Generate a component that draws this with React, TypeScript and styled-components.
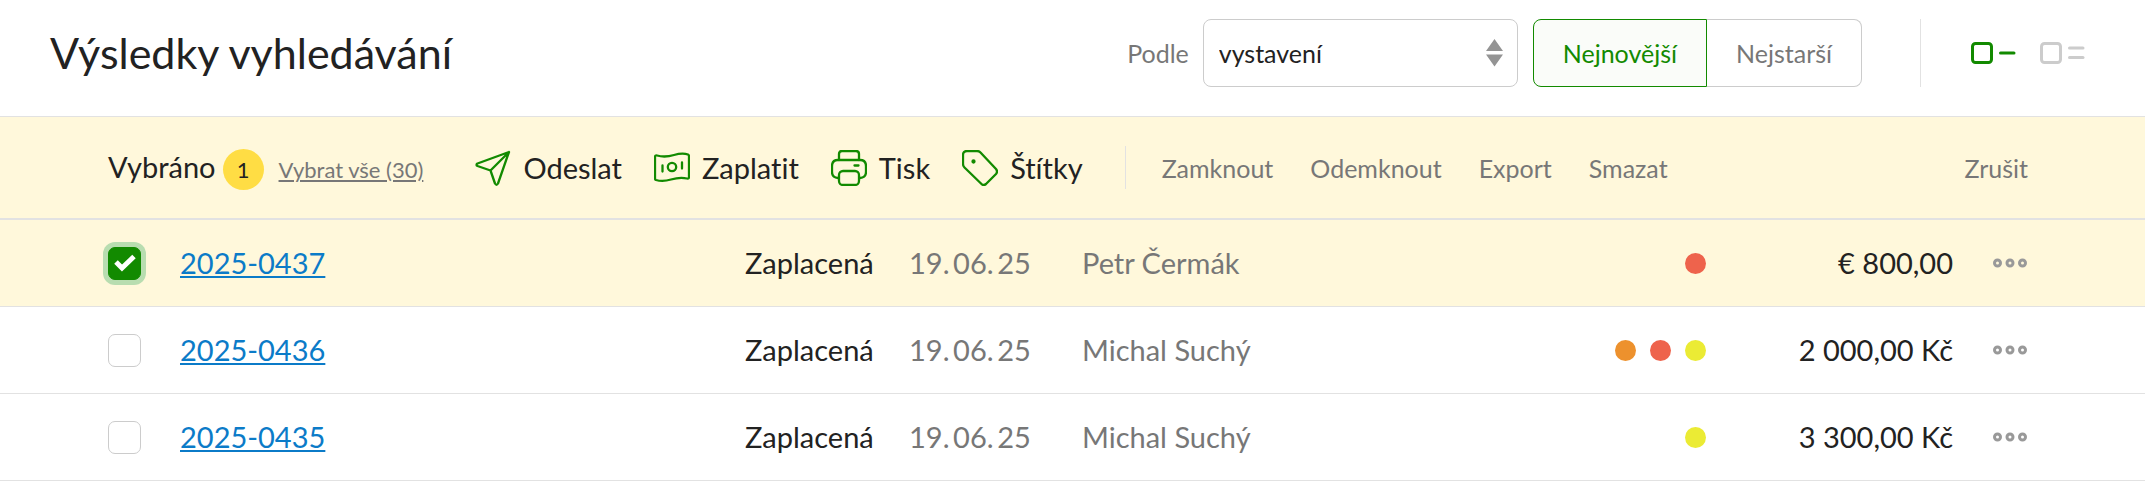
import React, { useState } from 'react';
import styled, { createGlobalStyle } from 'styled-components';

const green = '#128a00';
const ink = '#222222';
const gray = '#777777';
const line = '#e2e2e2';
const highlight = '#fff8db';

const GlobalStyle = createGlobalStyle`
  *, *::before, *::after { box-sizing: border-box; }
  body {
    margin: 0;
    background: #ffffff;
    color: ${ink};
    font-family: Lato, "Liberation Sans", sans-serif;
    font-size: 29px;
    line-height: 36px;
    font-variant-ligatures: none;
  }
  button, select, input { font: inherit; color: inherit; font-variant-ligatures: none; }
`;

const Header = styled.header`
  display: flex;
  align-items: center;
  padding: 19px 60px 29px 50px;
`;

const Title = styled.h1`
  margin: 0;
  margin-right: auto;
  font-size: 43px;
  font-weight: 400;
  line-height: 68px;
`;

const SortLabel = styled.label`
  margin-right: 14px;
  font-size: 25px;
  color: ${gray};
`;

const SelectWrap = styled.div`
  display: grid;
  align-items: center;
  width: 315px;
  margin-right: 15px;
`;

const Select = styled.select`
  grid-area: 1 / 1;
  width: 100%;
  height: 68px;
  padding: 0 48px 0 15px;
  font-size: 25px;
  appearance: none;
  background: #ffffff;
  border: 1px solid #cccccc;
  border-radius: 8px;
`;

const SelectArrows = styled.svg`
  grid-area: 1 / 1;
  justify-self: end;
  margin-right: 15px;
  pointer-events: none;
`;

const Segments = styled.div`
  display: flex;
`;

const Segment = styled.button<{ $active?: boolean }>`
  height: 68px;
  padding: 0 29px;
  font-size: 25px;
  color: ${p => (p.$active ? green : gray)};
  background: ${p => (p.$active ? '#fafcf9' : '#ffffff')};
  border: 1px solid ${p => (p.$active ? green : '#cccccc')};
  cursor: pointer;

  &:first-child { border-radius: 8px 0 0 8px; }
  &:last-child { border-radius: 0 8px 8px 0; border-left: 0; }
`;

const Views = styled.div`
  display: flex;
  align-items: center;
  gap: 24px;
  height: 68px;
  margin-left: 58px;
  padding-left: 50px;
  border-left: 1px solid ${line};
`;

const IconButton = styled.button`
  display: flex;
  padding: 0;
  color: ${p => p.color || 'inherit'};
  background: none;
  border: 0;
  cursor: pointer;
`;

const Toolbar = styled.div`
  display: flex;
  align-items: center;
  height: 104px;
  padding: 0 117px 0 108px;
  background: ${highlight};
  border-top: 1px solid ${line};
  border-bottom: 2px solid ${line};
`;

const Selection = styled.div`
  display: flex;
  align-items: baseline;
  padding-top: 4px;
`;

const Count = styled.span`
  margin: 0 15px 0 7px;
  width: 41px;
  height: 41px;
  font-size: 22px;
  line-height: 41px;
  text-align: center;
  background: #ffdd44;
  border-radius: 50%;
`;

const SelectAll = styled.a`
  font-size: 22px;
  color: ${gray};
`;

const Actions = styled.div`
  display: flex;
  gap: 32px;
  margin-left: 52px;
`;

const Action = styled.button`
  display: flex;
  align-items: center;
  gap: 12px;
  padding: 0;
  background: none;
  border: 0;
  cursor: pointer;

  svg { color: ${green}; }
`;

const MinorActions = styled.div`
  display: flex;
  align-items: center;
  gap: 37px;
  height: 43px;
  margin-left: 42px;
  padding-left: 36px;
  border-left: 1px solid ${line};
`;

const MinorAction = styled.button`
  padding: 0;
  font-size: 25px;
  color: ${gray};
  background: none;
  border: 0;
  cursor: pointer;
`;

const Cancel = styled(MinorAction)`
  margin-left: auto;
`;

const Table = styled.table`
  width: 100%;
  border-collapse: separate;
  border-spacing: 0;
  table-layout: fixed;
`;

const Row = styled.tr<{ $selected: boolean }>`
  background: ${p => (p.$selected ? highlight : '#ffffff')};
`;

const Cell = styled.td<{ $muted?: boolean; $right?: boolean }>`
  height: 87px;
  padding: 0;
  color: ${p => (p.$muted ? gray : ink)};
  text-align: ${p => (p.$right ? 'right' : 'left')};
  white-space: nowrap;
  border-bottom: 1px solid ${line};
`;

const CheckCell = styled(Cell)`
  padding-left: 108px;
`;

const MenuCell = styled(Cell)`
  padding-left: 40px;
`;

const DateText = styled.time`
  font-variant-numeric: tabular-nums;
`;

const CheckLabel = styled.label`
  display: grid;
  place-items: center;
  width: 33px;
  height: 33px;
`;

const Checkbox = styled.input`
  grid-area: 1 / 1;
  width: 33px;
  height: 33px;
  margin: 0;
  appearance: none;
  background: #ffffff;
  border: 1px solid #cccccc;
  border-radius: 7px;

  &:checked {
    background: ${green};
    border-color: ${green};
    box-shadow: 0 0 0 5px #b8ddb0;
  }
`;

const Tick = styled.svg`
  grid-area: 1 / 1;
  z-index: 1;
  pointer-events: none;
`;

const InvoiceLink = styled.a`
  color: #0b7bc8;
`;

const Tags = styled.div`
  display: flex;
  justify-content: flex-end;
  gap: 14px;
`;

const Tag = styled.span`
  width: 21px;
  height: 21px;
  background: ${p => p.color};
  border-radius: 50%;
`;

const stroke = {
  fill: 'none',
  stroke: 'currentColor',
  strokeWidth: 2.3,
  strokeLinecap: 'round' as const,
  strokeLinejoin: 'round' as const,
};

const SendIcon = () => (
  <svg width="36" height="36" viewBox="0 0 36 36" {...stroke}>
    <path d="M34 2 L2.500 13.500 Q0.500 15 2.500 16 L15.500 20.500 L20 33.500 Q21.500 36 23 33.500 Z M34 2 L15.500 20.500" />
  </svg>
);

const MoneyIcon = () => (
  <svg width="36" height="36" viewBox="0 0 36 36" {...stroke}>
    <path d="M1 7 Q1 5 3 5.500 C10 7.500 15 6.500 20 5 C25 3.500 30 3 34 4.500 Q35 5 35 6.500 V27 Q35 29 33 28.500 C27 27 22 28 17 29.500 C12 31 7 31.500 2 30 Q1 29.500 1 28.500 Z" />
    <circle cx="18" cy="17" r="4.200" />
    <path d="M8.500 15.500 V21.500 M28 12.500 V18.500" />
  </svg>
);

const PrinterIcon = () => (
  <svg width="36" height="36" viewBox="0 0 36 36" {...stroke}>
    <path d="M8 10 V4 Q8 1 11 1 H25 Q28 1 28 4 V10" />
    <path d="M7 28 Q1 27.500 1 22 V16 Q1 10 7 10 H29 Q35 10 35 16 V22 Q35 27.500 29 28" />
    <rect x="8" y="21" width="20" height="14" rx="4" />
    <path d="M23.500 15.500 H27.500" />
  </svg>
);

const TagIcon = () => (
  <svg width="36" height="36" viewBox="0 0 36 36" {...stroke}>
    <path d="M1 5 Q1 1 5 1 H15 Q17 1 18.500 2.500 L34 19 Q36 21.500 34 24 L24 34 Q21.500 36 19.500 34 L2.500 17.500 Q1 16 1 14 Z" />
    <circle cx="11.500" cy="11.500" r="1" fill="currentColor" />
  </svg>
);

const ViewIcon = ({ lines }: { lines: number[] }) => (
  <svg width="45" height="22" viewBox="0 0 45 22" {...stroke} strokeWidth={3}>
    <rect x="1.500" y="1.500" width="19" height="19" rx="3" />
    {lines.map(y => <path key={y} d={`M29.500 ${y} H43`} />)}
  </svg>
);

const MenuIcon = () => (
  <svg width="34" height="10" viewBox="0 0 34 10" fill="none" stroke="#999999" strokeWidth="3">
    <circle cx="4.500" cy="5" r="3" />
    <circle cx="17" cy="5" r="3" />
    <circle cx="29.500" cy="5" r="3" />
  </svg>
);

const red = '#ee634c';
const orange = '#ed912d';
const yellow = '#ebeb34';

const invoices = [
  { id: '2025-0437', client: 'Petr Čermák', tags: [red], amount: '€ 800,00' },
  { id: '2025-0436', client: 'Michal Suchý', tags: [orange, red, yellow], amount: '2 000,00 Kč' },
  { id: '2025-0435', client: 'Michal Suchý', tags: [yellow], amount: '3 300,00 Kč' },
];

const actions = [
  { label: 'Odeslat', Icon: SendIcon },
  { label: 'Zaplatit', Icon: MoneyIcon },
  { label: 'Tisk', Icon: PrinterIcon },
  { label: 'Štítky', Icon: TagIcon },
];

export default function App() {
  const [selected, setSelected] = useState<string[]>(['2025-0437']);
  const [newest, setNewest] = useState(true);
  const toggle = (id: string) =>
    setSelected(s => (s.includes(id) ? s.filter(x => x !== id) : [...s, id]));

  return (
    <>
      <GlobalStyle />
      <Header>
        <Title>Výsledky vyhledávání</Title>
        <SortLabel htmlFor="sort">Podle</SortLabel>
        <SelectWrap>
          <Select id="sort">
            <option>vystavení</option>
            <option>splatnosti</option>
          </Select>
          <SelectArrows width="17" height="28" viewBox="0 0 17 28" fill="#949494">
            <path d="M8.500 0 L17 12 H0 Z M0 15.500 H17 L8.500 27.500 Z" />
          </SelectArrows>
        </SelectWrap>
        <Segments>
          <Segment $active={newest} onClick={() => setNewest(true)}>Nejnovější</Segment>
          <Segment $active={!newest} onClick={() => setNewest(false)}>Nejstarší</Segment>
        </Segments>
        <Views>
          <IconButton color={green} aria-label="Kompaktní zobrazení"><ViewIcon lines={[11]} /></IconButton>
          <IconButton color="#cccccc" aria-label="Podrobné zobrazení"><ViewIcon lines={[6, 15.5]} /></IconButton>
        </Views>
      </Header>
      <Toolbar>
        <Selection>
          <span>Vybráno</span>
          <Count>{selected.length}</Count>
          <SelectAll href="#all">Vybrat vše (30)</SelectAll>
        </Selection>
        <Actions>
          {actions.map(({ label, Icon }) => (
            <Action key={label}><Icon />{label}</Action>
          ))}
        </Actions>
        <MinorActions>
          {['Zamknout', 'Odemknout', 'Export', 'Smazat'].map(label => (
            <MinorAction key={label}>{label}</MinorAction>
          ))}
        </MinorActions>
        <Cancel onClick={() => setSelected([])}>Zrušit</Cancel>
      </Toolbar>
      <Table>
        <colgroup>
          <col style={{ width: 180 }} />
          <col />
          <col style={{ width: 164 }} />
          <col style={{ width: 173 }} />
          <col style={{ width: 440 }} />
          <col style={{ width: 184 }} />
          <col style={{ width: 247 }} />
          <col style={{ width: 192 }} />
        </colgroup>
        <tbody>
          {invoices.map(({ id, client, tags, amount }) => (
            <Row key={id} $selected={selected.includes(id)}>
              <CheckCell>
                <CheckLabel>
                  <Checkbox
                    type="checkbox"
                    aria-label={id}
                    checked={selected.includes(id)}
                    onChange={() => toggle(id)}
                  />
                  {selected.includes(id) && (
                    <Tick width="22" height="18" viewBox="0 0 22 18" fill="none" stroke="#ffffff" strokeWidth="5">
                      <path d="M2 8 L8 14 L20 2.500" />
                    </Tick>
                  )}
                </CheckLabel>
              </CheckCell>
              <Cell><InvoiceLink href={`#${id}`}>{id}</InvoiceLink></Cell>
              <Cell>Zaplacená</Cell>
              <Cell $muted><DateText dateTime="2025-06-19">{'19.\u200906.\u200925'}</DateText></Cell>
              <Cell $muted>{client}</Cell>
              <Cell>
                <Tags>{tags.map(color => <Tag key={color} color={color} />)}</Tags>
              </Cell>
              <Cell $right>{amount}</Cell>
              <MenuCell>
                <IconButton aria-label="Další akce"><MenuIcon /></IconButton>
              </MenuCell>
            </Row>
          ))}
        </tbody>
      </Table>
    </>
  );
}
